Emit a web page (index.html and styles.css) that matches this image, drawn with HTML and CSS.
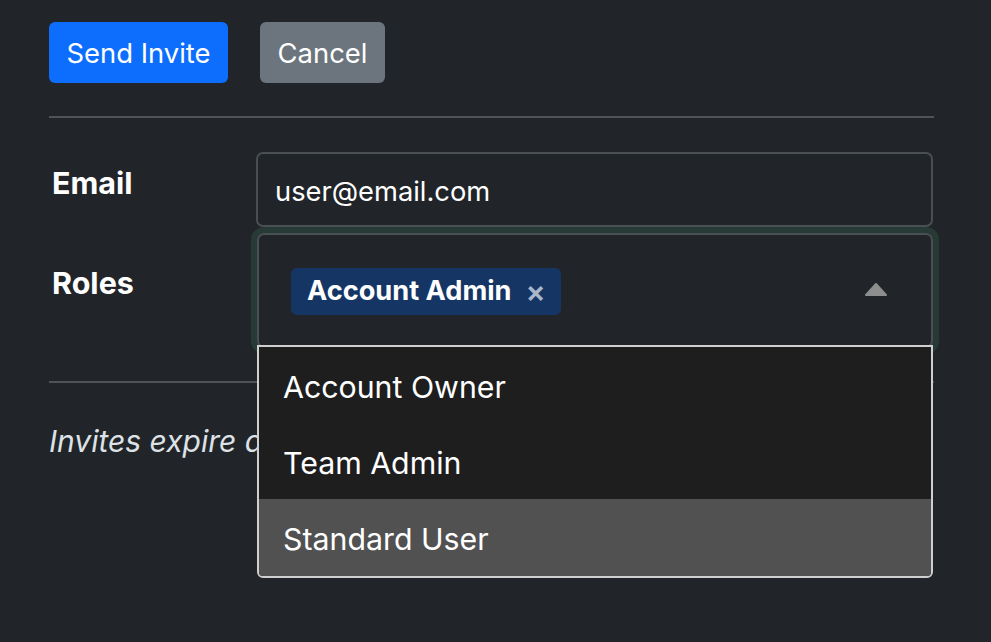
FILE: index.html
```html
<!DOCTYPE html>
<html>
<head>
<meta charset="utf-8">
<link rel="stylesheet" href="styles.css">
</head>
<body>
<div class="page">
  <div class="actions">
    <button class="btn btn-primary">Send Invite</button>
    <button class="btn btn-secondary">Cancel</button>
  </div>
  <hr class="rule rule-top">
  <div class="form-row row-email">
    <label class="label">Email</label>
    <div class="input">user@email.com</div>
  </div>
  <div class="form-row row-roles">
    <label class="label">Roles</label>
    <div class="select-wrap">
      <div class="select">
        <span class="tag">Account Admin <span class="tag-x">×</span></span>
        <svg class="caret" width="24" height="15" viewBox="0 0 24 15"><path d="M12 2 L22 13 L2 13 Z" fill="#8e8e8e" stroke="#8e8e8e" stroke-width="2" stroke-linejoin="round"/></svg>
      </div>
      <ul class="menu">
        <li class="item">Account Owner</li>
        <li class="item">Team Admin</li>
        <li class="item active">Standard User</li>
      </ul>
    </div>
  </div>
  <hr class="rule rule-bottom">
  <p class="note">Invites expire after 7 days.</p>
</div>
</body>
</html>
```

FILE: styles.css
```css
* { box-sizing: border-box; }
html, body { margin: 0; padding: 0; }
body {
  background: #212529;
  color: #dee2e6;
  font-family: Inter, "Liberation Sans", sans-serif;
  font-size: 27px;
  width: 991px;
  height: 642px;
  overflow: hidden;
}
.page {
  padding: 22px 57px 0 49px;
}
.actions {
  display: flex;
  gap: 32px;
}
.btn {
  font-family: inherit;
  font-size: 27.4px;
  line-height: 38px;
  height: 61px;
  padding: 1px 0 0 0;
  border: none;
  border-radius: 6px;
  color: #fff;
  text-align: center;
}
.btn-primary { background: #0d6efd; width: 179px; }
.btn-secondary { background: #6c757d; width: 125px; }
.rule {
  border: none;
  height: 2px;
  background: #4f5357;
  margin: 0;
}
.rule-top { margin-top: 33px; }
.form-row {
  display: flex;
  align-items: flex-start;
}
.row-email { margin-top: 34px; }
.label {
  width: 207px;
  flex: none;
  padding-left: 3px;
  font-weight: 700;
  color: #fff;
  font-size: 30.5px;
  line-height: 1.2;
}
.row-email .label { padding-top: 13px; }
.input {
  width: 677px;
  height: 75px;
  border: 2px solid #4a4f54;
  border-radius: 7px;
  padding: 4px 0 0 17px;
  display: flex;
  align-items: center;
  color: #fff;
  font-size: 27.3px;
}
.row-roles { margin-top: 6px; }
.row-roles .label { padding-top: 32px; }
.select-wrap {
  position: relative;
  width: 676px;
  margin-left: 1px;
}
.select {
  width: 676px;
  height: 115px;
  border: 2px solid #4a4f54;
  border-radius: 7px;
  box-shadow: 0 0 0 6px #283a35;
  display: flex;
  align-items: center;
  justify-content: space-between;
  padding: 0 43px 0 32px;
}
.tag {
  display: inline-flex;
  align-items: center;
  height: 47px;
  padding: 0 15px 1px 16px;
  background: #153665;
  border-radius: 6px;
  color: #fff;
  font-weight: 700;
  font-size: 27.2px;
  margin-top: 1px;
}
.tag-x {
  color: #aab6cb;
  font-weight: 600;
  margin-left: 14px;
  font-size: 30px;
}
.caret { display: block; margin-top: -2px; }
.menu {
  position: absolute;
  left: 0;
  top: 112px;
  width: 676px;
  margin: 0;
  padding: 0;
  list-style: none;
  background: #1e1e1f;
  border: 2px solid #cfcfcf;
  border-radius: 0 0 6px 6px;
  overflow: hidden;
}
.item {
  height: 76px;
  display: flex;
  align-items: center;
  padding-left: 24px;
  padding-top: 3px;
  font-size: 30.3px;
  color: #fff;
}
.item.active { background: #515151; height: 77px; }
.rule-bottom { margin-top: 33px; width: 885px; }
.note {
  margin: 40px 0 0 0;
  font-style: italic;
  font-size: 30px;
  color: #dee2e6;
}
```
